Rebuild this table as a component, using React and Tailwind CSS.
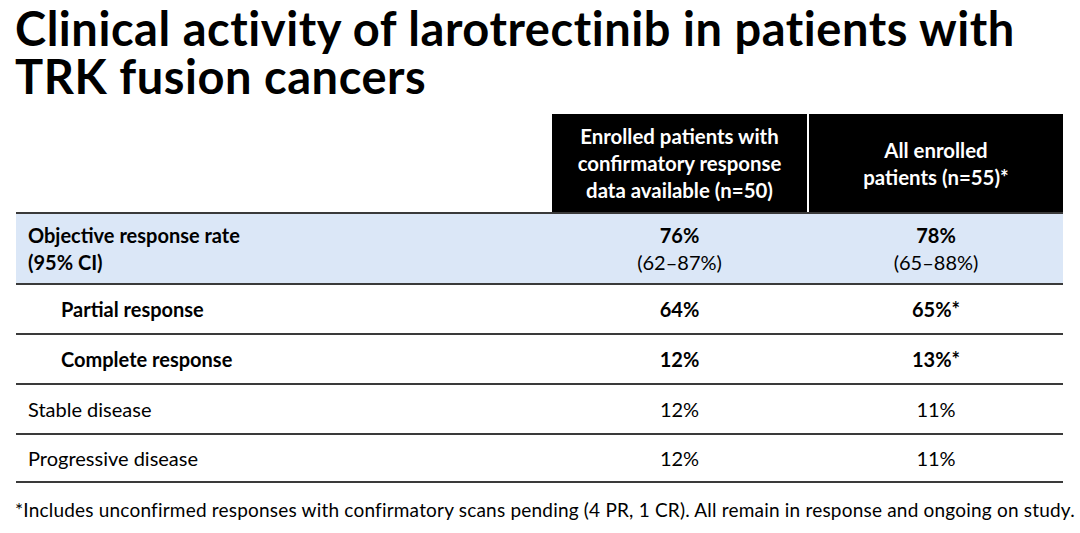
const rows = [
  { label: 'Objective response rate', sub: '(95% CI)', a: '76%', aSub: '(62–87%)', b: '78%', bSub: '(65–88%)', hi: true, bold: true },
  { label: 'Partial response', a: '64%', b: '65%*', bold: true, indent: true },
  { label: 'Complete response', a: '12%', b: '13%*', bold: true, indent: true },
  { label: 'Stable disease', a: '12%', b: '11%' },
  { label: 'Progressive disease', a: '12%', b: '11%' },
];

export default function App() {
  return (
    <div
      className="w-[1080px] h-[533px] bg-white text-black overflow-hidden"
      style={{ fontFamily: 'Lato, "Open Sans", sans-serif' }}
    >
      <h1 className="pl-[15px] pt-[4px] text-[47px] leading-[48px] font-bold tracking-[0.55px] whitespace-nowrap">
        Clinical activity of larotrectinib in patients with
        <br />
        TRK fusion cancers
      </h1>

      <div className="ml-[16px] mt-[14px] w-[1047px]">
        <div className="flex h-[98px]">
          <div className="w-[536px]" />
          <div className="w-[255px] bg-black text-white font-bold text-[20.4px] leading-[27px] flex items-center justify-center text-center pt-[1px]">
            Enrolled patients with
            <br />
            confirmatory response
            <br />
            data available (n=50)
          </div>
          <div className="w-[2px] bg-white" />
          <div className="flex-1 bg-black text-white font-bold text-[20.4px] leading-[27px] flex items-center justify-center text-center pt-[1px]">
            All enrolled
            <br />
            patients (n=55)*
          </div>
        </div>

        {rows.map((r, i) => (
          <div
            key={i}
            className={`flex border-t-2 border-[#3a3a3a] text-[20px] ${r.hi ? 'h-[71px] bg-[#dbe7f7]' : 'h-[50px]'} ${i === rows.length - 1 ? 'border-b-2' : ''}`}
          >
            <div
              className={`w-[536px] flex flex-col justify-center leading-[27px] ${r.indent ? 'pl-[45px]' : 'pl-[12px]'} ${r.bold ? 'font-bold' : ''}`}
            >
              <span>{r.label}</span>
              {r.sub && <span>{r.sub}</span>}
            </div>
            <div className="w-[255px] flex flex-col items-center justify-center leading-[27px]">
              <span className={r.bold ? 'font-bold' : ''}>{r.a}</span>
              {r.aSub && <span>{r.aSub}</span>}
            </div>
            <div className="w-[2px]" />
            <div className="flex-1 flex flex-col items-center justify-center leading-[27px]">
              <span className={r.bold ? 'font-bold' : ''}>{r.b}</span>
              {r.bSub && <span>{r.bSub}</span>}
            </div>
          </div>
        ))}
      </div>

      <p className="pl-[15px] mt-[16px] text-[19px] leading-[22px] tracking-[0.2px] whitespace-nowrap">
        *Includes unconfirmed responses with confirmatory scans pending (4 PR, 1 CR). All remain in response and ongoing on study.
      </p>
    </div>
  );
}
